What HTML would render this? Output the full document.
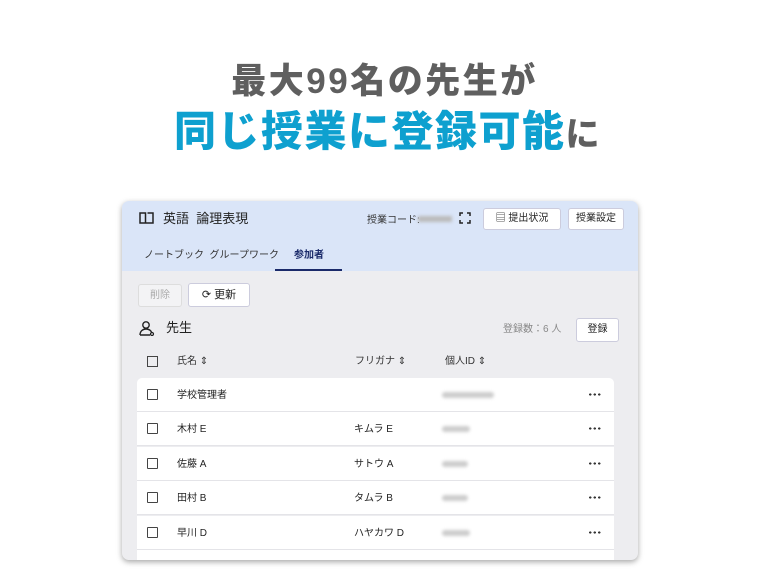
<!DOCTYPE html>
<html><head><meta charset="utf-8"><style>
*{margin:0;padding:0;box-sizing:border-box}
body{width:761px;height:578px;background:#fff;font-family:"Liberation Sans","Noto Sans CJK JP",sans-serif;position:relative;overflow:hidden;color:#222;line-height:1.15}
.a{position:absolute;white-space:nowrap}
.t1{left:4px;width:761px;text-align:center;top:64px;font-size:35px;font-weight:900;color:#5f5f5f;letter-spacing:2.5px;line-height:1}
.t2{left:7px;width:761px;text-align:center;top:111px;font-size:42px;font-weight:900;color:#0ea0cf;letter-spacing:1.5px;line-height:1}
.t2 span{color:#5f5f5f;font-size:34px}
.card{left:122px;top:201px;width:516px;height:359px;background:#ededf0;border-radius:7px;box-shadow:0 2px 6px rgba(0,0,0,.35);overflow:hidden}
.hd{position:absolute;left:0;top:0;width:516px;height:70px;background:#dae5f8}
.btn{position:absolute;background:#fff;border:1px solid #ccd;border-radius:3px;font-size:10px;text-align:center}
.s{font-size:10px}
.row{position:absolute;left:15px;width:477px;height:34px;background:#fff;border-bottom:1px solid #e4e4e8}
.cb{position:absolute;left:10px;top:11px;width:11px;height:11px;border:1.5px solid #444;border-radius:1px}
.row .n{position:absolute;left:40px;top:12px;font-size:10px}
.row .k{position:absolute;left:217px;top:12px;font-size:10px}
.row .i{position:absolute;left:305px;top:14px;height:6px;background:#ccc;border-radius:3px;filter:blur(1.5px)}
.row .d{position:absolute;left:451px;top:15px;width:13px;height:3px;background:radial-gradient(circle,#333 1.1px,transparent 1.3px) 0 0/4.5px 3px repeat-x}
</style></head><body>
<div class="a t1">最大99名の先生が</div>
<div class="a t2">同じ授業に登録可能<span>に</span></div>
<div class="a card">
 <div class="hd">
  <svg class="a" style="left:17px;top:11px" width="15" height="13" viewBox="0 0 15 13"><path d="M1 1h5.5v10H1zM8.5 1H14v10H8.5M6.5 11h2" fill="none" stroke="#222" stroke-width="1.5"/></svg>
  <div class="a" style="left:41px;top:11px;font-size:13px">英語 &nbsp;論理表現</div>
  <div class="a s" style="left:245px;top:14px;color:#333">授業コード:</div>
  <div class="a" style="left:296px;top:15px;width:34px;height:6px;background:#bbb;filter:blur(1.5px)"></div>
  <svg class="a" style="left:337px;top:11px" width="12" height="12" viewBox="0 0 12 12"><path d="M1 4V1h3M8 1h3v3M11 8v3H8M4 11H1V8" fill="none" stroke="#222" stroke-width="1.5"/></svg>
  <div class="btn" style="left:361px;top:7px;width:78px;height:22px;line-height:20px">&#9636; 提出状況</div>
  <div class="btn" style="left:446px;top:7px;width:56px;height:22px;line-height:20px">授業設定</div>
  <div class="a s" style="left:22px;top:49px;color:#333">ノートブック&nbsp;&nbsp;グループワーク</div>
  <div class="a s" style="left:172px;top:49px;color:#1a2a6a;font-weight:bold">参加者</div>
  <div class="a" style="left:153px;top:68px;width:67px;height:2px;background:#1a2a6a"></div>
 </div>
 <div class="btn" style="left:16px;top:83px;width:44px;height:23px;line-height:21px;color:#aaa;background:#f3f3f5;border-color:#ddd">削除</div>
 <div class="btn" style="left:66px;top:82px;width:62px;height:24px;line-height:22px;font-size:11px">&#10227; 更新</div>
 <svg class="a" style="left:17px;top:119px" width="16" height="16" viewBox="0 0 16 16"><circle cx="7" cy="5" r="3.2" fill="none" stroke="#222" stroke-width="1.4"/><path d="M1 15c0-4 3-6 6-6s5 1.5 6 4M1 15h10" fill="none" stroke="#222" stroke-width="1.4"/><circle cx="13" cy="14" r="1.5" fill="none" stroke="#222" stroke-width="1.2"/></svg>
 <div class="a" style="left:44px;top:120px;font-size:13px">先生</div>
 <div class="a s" style="left:381px;top:123px;color:#888">登録数：6 人</div>
 <div class="btn" style="left:454px;top:117px;width:43px;height:24px;line-height:22px">登録</div>
 <div class="a" style="left:25px;top:155px;width:11px;height:11px;border:1.5px solid #444"></div>
 <div class="a s" style="left:55px;top:155px;color:#333">氏名 ⇕</div>
 <div class="a s" style="left:233px;top:155px;color:#333">フリガナ ⇕</div>
 <div class="a s" style="left:323px;top:155px;color:#333">個人ID ⇕</div>
 <div class="row" style="top:177px;border-radius:5px 5px 0 0"><div class="cb"></div><div class="n">学校管理者</div><div class="i" style="width:52px"></div><div class="d"></div></div>
 <div class="row" style="top:211px"><div class="cb"></div><div class="n">木村 E</div><div class="k">キムラ E</div><div class="i" style="width:28px"></div><div class="d"></div></div>
 <div class="row" style="top:246px"><div class="cb"></div><div class="n">佐藤 A</div><div class="k">サトウ A</div><div class="i" style="width:26px"></div><div class="d"></div></div>
 <div class="row" style="top:280px"><div class="cb"></div><div class="n">田村 B</div><div class="k">タムラ B</div><div class="i" style="width:26px"></div><div class="d"></div></div>
 <div class="row" style="top:315px"><div class="cb"></div><div class="n">早川 D</div><div class="k">ハヤカワ D</div><div class="i" style="width:28px"></div><div class="d"></div></div>
 <div class="row" style="top:349px"></div>
</div>
</body></html>
